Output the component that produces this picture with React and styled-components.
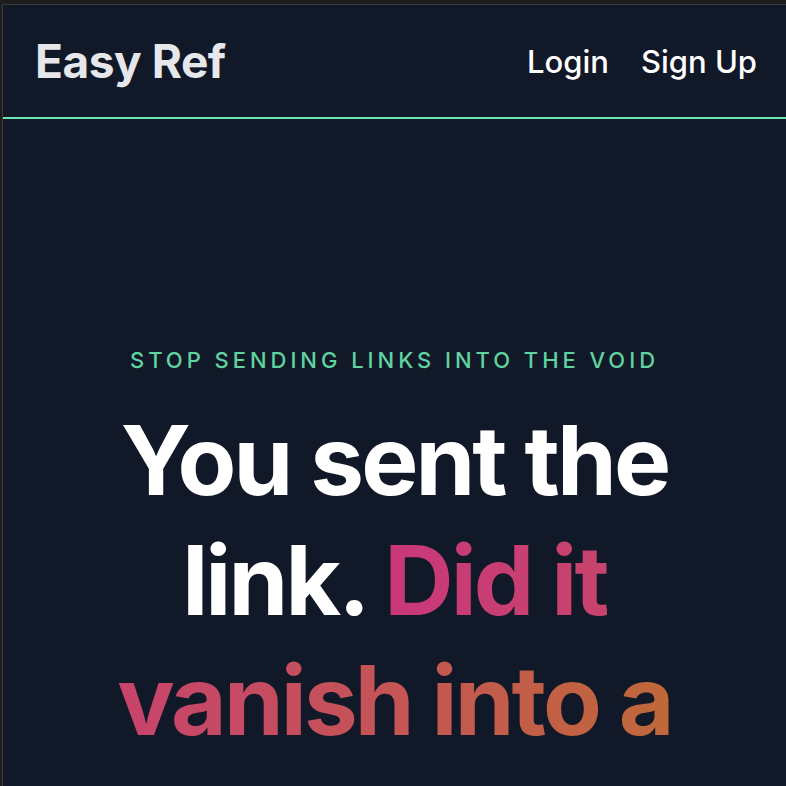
import React from 'react';
import styled, { createGlobalStyle } from 'styled-components';

const GlobalStyle = createGlobalStyle`
  * {
    box-sizing: border-box;
  }
  body {
    margin: 0;
    background-color: #1d1d1d;
    font-family: Inter, "Noto Sans", sans-serif;
    overflow: hidden;
  }
`;

const Frame = styled.div`
  margin: 4px 0 0 2px;
  border-top: 1px solid #3b3b3d;
  border-left: 1px solid #3b3b3d;
  min-height: calc(100vh - 4px);
  background-color: #111827;
  color: #ffffff;
`;

const Header = styled.header`
  display: flex;
  align-items: center;
  justify-content: space-between;
  height: 114px;
  padding: 0 29px 0 32px;
  border-bottom: 2px solid #6ee7b7;
`;

const Logo = styled.a`
  font-size: 46px;
  font-weight: 700;
  color: #e5e7eb;
  letter-spacing: -0.01em;
  text-decoration: none;
`;

const Nav = styled.nav`
  display: flex;
  align-items: center;
  gap: 32px;
`;

const NavLink = styled.a`
  font-size: 31px;
  font-weight: 500;
  color: #ffffff;
  text-decoration: none;
`;

const Hero = styled.section`
  display: flex;
  flex-direction: column;
  align-items: center;
  padding: 227px 24px 0;
  text-align: center;
`;

const Tagline = styled.p`
  margin: 0 0 26px;
  font-size: 22px;
  line-height: 28px;
  font-weight: 500;
  letter-spacing: 0.18em;
  color: #5fd3a0;
  text-transform: uppercase;
`;

const Headline = styled.h1`
  margin: 0;
  max-width: 600px;
  font-size: 96px;
  line-height: 120px;
  font-weight: 700;
  letter-spacing: -0.03em;
  color: #ffffff;
`;

const Accent = styled.span`
  background-image: linear-gradient(90deg, #c9387a 0%, #c64a64 30%, #c0683a 68%, #bb7a30 100%);
  -webkit-background-clip: text;
  background-clip: text;
  color: transparent;
`;

const App = () => (
  <>
    <GlobalStyle />
    <Frame>
      <Header>
        <Logo href="#">Easy Ref</Logo>
        <Nav>
          <NavLink href="#">Login</NavLink>
          <NavLink href="#">Sign Up</NavLink>
        </Nav>
      </Header>
      <Hero>
        <Tagline>Stop sending links into the void</Tagline>
        <Headline>
          You sent the link. <Accent>Did it vanish into a vacuum</Accent>
        </Headline>
      </Hero>
    </Frame>
  </>
);

export default App;
